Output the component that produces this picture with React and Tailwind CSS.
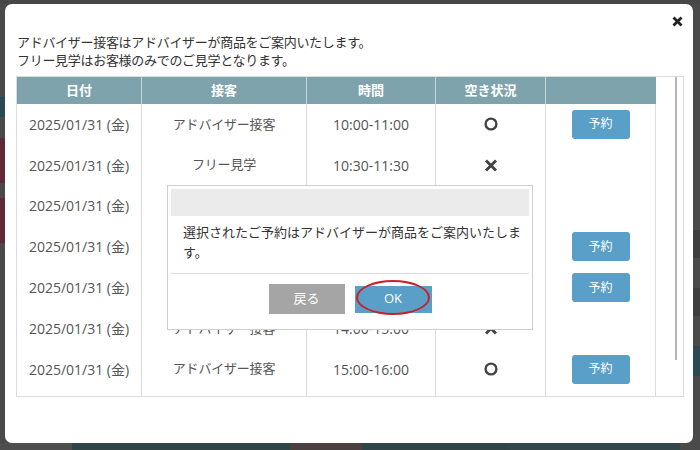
import React from "react";

const rows = [
  { type: "アドバイザー接客", time: "10:00-11:00", status: "o", reserve: true },
  { type: "フリー見学", time: "10:30-11:30", status: "x", reserve: false },
  { type: "アドバイザー接客", time: "11:00-12:00", status: "x", reserve: false },
  { type: "アドバイザー接客", time: "12:00-13:00", status: "o", reserve: true },
  { type: "フリー見学", time: "13:00-14:00", status: "o", reserve: true },
  { type: "アドバイザー接客", time: "14:00-15:00", status: "x", reserve: false },
  { type: "アドバイザー接客", time: "15:00-16:00", status: "o", reserve: true },
];

const font = { fontFamily: '"Open Sans", "Noto Sans CJK JP", sans-serif' };

const CircleMark = () => (
  <svg width="14" height="14" viewBox="0 0 14 14">
    <circle cx="7" cy="7" r="5.4" fill="none" stroke="#444" strokeWidth="2.4" />
  </svg>
);

const CrossMark = () => (
  <svg width="14" height="13" viewBox="0 0 14 13">
    <path d="M2 1.5 L12 11.5 M12 1.5 L2 11.5" stroke="#444" strokeWidth="3" strokeLinecap="butt" />
  </svg>
);

const App = () => {
  return (
    <div className="w-[700px] h-[450px] bg-[#4a4a4a] flex flex-col overflow-hidden" style={font}>
      {/* top strip of the page behind the overlay */}
      <div className="h-[4px] shrink-0 bg-[#474747]" />

      <div className="flex h-[439px] shrink-0">
        {/* left strip */}
        <div className="w-[5px] shrink-0 flex flex-col">
          <div className="h-[93px]" />
          <div className="h-[20px] bg-[#2c4953]" />
          <div className="h-[21px]" />
          <div className="h-[45px] bg-[#5d2a35]" />
          <div className="h-[15px]" />
          <div className="h-[45px] bg-[#5d2a35]" />
        </div>

        {/* modal */}
        <div className="relative w-[688px] h-[439px] bg-white rounded-[7px] pt-[29px] pl-[11px] pr-[9px]">
          <button className="absolute right-[10px] top-[11px] w-[12px] h-[12px] flex items-center justify-center">
            <svg width="11" height="11" viewBox="0 0 11 11">
              <path d="M1.5 1.5 L9.5 9.5 M9.5 1.5 L1.5 9.5" stroke="#222" strokeWidth="2.8" />
            </svg>
          </button>

          <div className="pl-[1px] text-[13px] leading-[18px] text-[#333] tracking-[-0.3px]">
            <p>アドバイザー接客はアドバイザーが商品をご案内いたします。</p>
            <p>フリー見学はお客様のみでのご見学となります。</p>
          </div>

          {/* table */}
          <div className="mt-[7px] w-[668px] h-[321px] border border-[#dcdcdc] flex">
            <div className="w-[639px] shrink-0 flex flex-col">
              <div className="grid grid-cols-[125px_165px_129px_110px_110px] h-[27px] shrink-0 bg-[#7fa3ad] text-white text-[13px] font-bold">
                {["日付", "接客", "時間", "空き状況", ""].map((h, i) => (
                  <div key={i} className={`flex items-center justify-center ${i < 4 ? "border-r border-[#c4d6db]" : ""}`}>
                    {h}
                  </div>
                ))}
              </div>
              {rows.map((row, i) => (
                <div key={i} className="grid grid-cols-[125px_165px_129px_110px_110px] h-[40.8px] shrink-0 text-[14px] text-[#555]">
                  <div className="flex items-center justify-center border-r border-[#dcdcdc]">2025/01/31 (金)</div>
                  <div className="flex items-center justify-center border-r border-[#dcdcdc] text-[13px] tracking-[-0.2px]">{row.type}</div>
                  <div className="flex items-center justify-center border-r border-[#dcdcdc]">{row.time}</div>
                  <div className="flex items-center justify-center border-r border-[#dcdcdc]">
                    {row.status === "o" ? <CircleMark /> : <CrossMark />}
                  </div>
                  <div className="flex items-center justify-center border-r border-[#dcdcdc]">
                    {row.reserve && (
                      <button className="w-[58px] h-[29px] rounded-[3px] bg-[#5a9fc7] text-white text-[12px]">予約</button>
                    )}
                  </div>
                </div>
              ))}
              <div className="grid grid-cols-[125px_165px_129px_110px_110px] flex-1">
                <div className="border-r border-[#dcdcdc]" />
                <div className="border-r border-[#dcdcdc]" />
                <div className="border-r border-[#dcdcdc]" />
                <div className="border-r border-[#dcdcdc]" />
                <div className="border-r border-[#dcdcdc]" />
              </div>
            </div>
            {/* scrollbar gutter */}
            <div className="flex-1 pl-[19px]">
              <div className="w-[2px] h-[283px] bg-[#b4b4b4]" />
            </div>
          </div>

          {/* confirmation dialog */}
          <div className="absolute left-[162px] top-[181px] w-[366px] h-[145px] bg-white border border-[#cfcfcf] p-[3px] flex flex-col">
            <div className="h-[27px] bg-[#ebebeb] shrink-0" />
            <p className="mt-[6px] pl-[12px] w-[352px] text-[13px] leading-[20px] text-[#333]">
              選択されたご予約はアドバイザーが商品をご案内いたします。
            </p>
            <div className="mt-[11px] h-px bg-[#dedede] shrink-0" />
            <div className="pt-[10px] flex items-center justify-center gap-[10px]">
              <button className="w-[76px] h-[30px] bg-[#a5a5a5] text-white text-[13px]">戻る</button>
              <div className="relative">
                <button className="w-[77px] h-[27px] bg-[#5a9fc7] text-white text-[13px]">OK</button>
                <div className="absolute left-[1px] top-[-5px] w-[74px] h-[35px] rounded-[50%] border-2 border-[#c9202c]" />
              </div>
            </div>
          </div>
        </div>

        {/* right strip */}
        <div className="w-[7px] shrink-0 flex flex-col">
          <div className="h-[226px]" />
          <div className="h-[28px] bg-[#3e3e3e]" />
          <div className="h-[30px]" />
          <div className="h-[28px] bg-[#3e3e3e]" />
          <div className="h-[30px]" />
          <div className="h-[30px] bg-[#2c4953]" />
        </div>
      </div>

      {/* bottom strip */}
      <div className="h-[7px] shrink-0 flex">
        <div className="w-[72px] bg-[#4e4e4e]" />
        <div className="w-[218px] bg-[#2f4548]" />
        <div className="w-[72px] bg-[#4b3f3f]" />
        <div className="w-[148px] bg-[#2f4548]" />
        <div className="w-[170px] bg-[#34474b]" />
        <div className="flex-1 bg-[#4a4a4a]" />
      </div>
    </div>
  );
};

export default App;
